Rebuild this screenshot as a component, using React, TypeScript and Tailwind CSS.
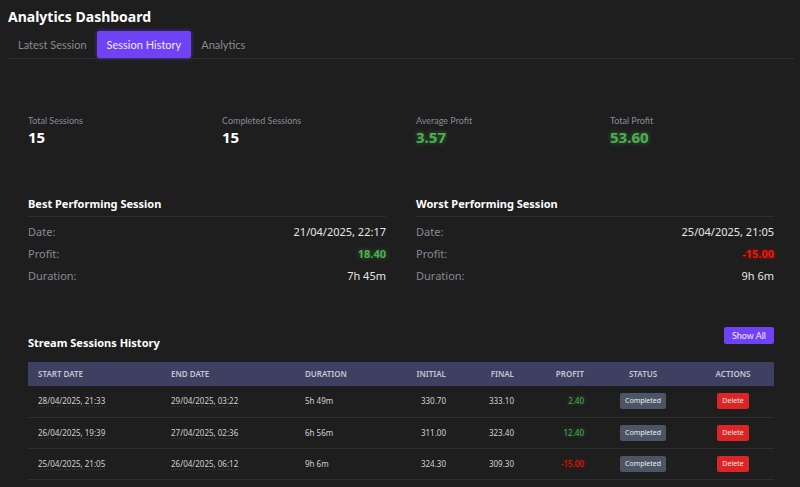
import { clsx } from 'clsx';

type Tone = 'plain' | 'gain' | 'loss';

const toneClass: Record<Tone, string> = {
  plain: 'text-white',
  gain: 'text-[#4caf50] [text-shadow:0_0_5px_rgba(76,175,80,0.6)]',
  loss: 'text-[#f5150a] [text-shadow:0_0_5px_rgba(245,21,10,0.6)]',
};

const tabs = ['Latest Session', 'Session History', 'Analytics'];

const stats: { label: string; value: string; tone: Tone }[] = [
  { label: 'Total Sessions', value: '15', tone: 'plain' },
  { label: 'Completed Sessions', value: '15', tone: 'plain' },
  { label: 'Average Profit', value: '3.57', tone: 'gain' },
  { label: 'Total Profit', value: '53.60', tone: 'gain' },
];

const sessions = [
  { start: '28/04/2025, 21:33', end: '29/04/2025, 03:22', duration: '5h 49m', initial: '330.70', final: '333.10', profit: '2.40' },
  { start: '26/04/2025, 19:39', end: '27/04/2025, 02:36', duration: '6h 56m', initial: '311.00', final: '323.40', profit: '12.40' },
  { start: '25/04/2025, 21:05', end: '26/04/2025, 06:12', duration: '9h 6m', initial: '324.30', final: '309.30', profit: '-15.00' },
  { start: '', end: '', duration: '', initial: '', final: '', profit: '' },
];

function Performance({ title, date, profit, duration, tone }: { title: string; date: string; profit: string; duration: string; tone: Tone }) {
  return (
    <section>
      <h2 className="border-b border-[#2e2e2e] pb-1 text-[11px] leading-4 font-bold text-white">{title}</h2>
      <dl className="mt-1 text-[11px] leading-[22px] text-[#868b94]">
        <div className="flex justify-between">
          <dt>Date:</dt>
          <dd className="text-[#e6e6e6]">{date}</dd>
        </div>
        <div className="flex justify-between">
          <dt>Profit:</dt>
          <dd className={clsx('font-bold', toneClass[tone])}>{profit}</dd>
        </div>
        <div className="flex justify-between">
          <dt>Duration:</dt>
          <dd className="text-[#e6e6e6]">{duration}</dd>
        </div>
      </dl>
    </section>
  );
}

function DateCell({ value }: { value: string }) {
  return (
    <td className="px-2.5">
      {value && <span className="border-b border-dotted border-[#3a3a3a]">{value}</span>}
    </td>
  );
}

export default function App() {
  return (
    <div className="h-screen overflow-hidden bg-[#1e1e1e] pt-1.5 pr-1.5 pl-2 font-['Noto_Sans',sans-serif] text-[#d0d2d6]">
      <h1 className="text-[14px] leading-[22px] font-bold text-white">Analytics Dashboard</h1>
      <nav className="mt-[3px] flex border-b border-[#2e2e2e] font-[Lato,sans-serif]">
        {tabs.map((tab) => (
          <button
            key={tab}
            className={clsx(
              'h-[27px] rounded-[2px] px-2.5 text-[11px] leading-4 whitespace-nowrap',
              tab === 'Session History' ? 'bg-[#6f42f5] text-[#efeaff] shadow-[0_0_4px_rgba(111,66,245,0.6)]' : 'text-[#868b94]',
            )}
          >
            {tab}
          </button>
        ))}
      </nav>

      <main className="px-5 pt-[55px]">
        <dl className="grid grid-cols-4 gap-[30px]">
          {stats.map((s) => (
            <div key={s.label}>
              <dt className="font-[Lato,sans-serif] text-[9px] leading-[14px] whitespace-nowrap text-[#868b94]">{s.label}</dt>
              <dd className={clsx('text-[15px] leading-[18px] font-bold', toneClass[s.tone])}>{s.value}</dd>
            </div>
          ))}
        </dl>

        <div className="mt-[50px] grid grid-cols-2 gap-[30px]">
          <Performance title="Best Performing Session" date="21/04/2025, 22:17" profit="18.40" duration="7h 45m" tone="gain" />
          <Performance title="Worst Performing Session" date="25/04/2025, 21:05" profit="-15.00" duration="9h 6m" tone="loss" />
        </div>

        <div className="mt-10 flex items-start justify-between">
          <h2 className="mt-2 text-[11px] leading-4 font-bold text-white">Stream Sessions History</h2>
          <button className="h-[17px] rounded-[2px] bg-[#6f42f5] px-2 font-[Lato,sans-serif] text-[9px] leading-4 text-[#efeaff]">Show All</button>
        </div>

        <table className="mt-[11px] w-full table-fixed border-collapse text-left text-[8px] leading-3">
          <colgroup>
            <col className="w-[133px]" />
            <col className="w-[134px]" />
            <col className="w-[90px]" />
            <col className="w-[71px]" />
            <col className="w-[68px]" />
            <col className="w-[70px]" />
            <col className="w-[98px]" />
            <col className="w-[82px]" />
          </colgroup>
          <thead>
            <tr className="h-6 bg-[#3d4061] text-[#c4c7d2] uppercase *:px-2.5 *:font-semibold">
              <th>Start Date</th>
              <th>End Date</th>
              <th>Duration</th>
              <th className="text-right">Initial</th>
              <th className="text-right">Final</th>
              <th className="text-right">Profit</th>
              <th className="text-center">Status</th>
              <th className="text-center">Actions</th>
            </tr>
          </thead>
          <tbody>
            {sessions.map((s, i) => (
              <tr key={i} className="h-[31px] border-b border-[#2e2e2e]">
                <DateCell value={s.start} />
                <DateCell value={s.end} />
                <td className="px-2.5">{s.duration}</td>
                <td className="px-2.5 text-right">{s.initial}</td>
                <td className="px-2.5 text-right">{s.final}</td>
                <td className={clsx('px-2.5 text-right', toneClass[s.profit.startsWith('-') ? 'loss' : 'gain'])}>{s.profit}</td>
                <td className="text-center">
                  <span className="mx-auto block w-fit rounded-[2px] bg-[#4b5563] px-[5px] text-[7px] leading-4 text-[#eeeeee]">Completed</span>
                </td>
                <td className="text-center">
                  <button className="mx-auto block rounded-[2px] bg-[#dc2626] px-[5px] text-[7px] leading-4 text-[#fbe4e4]">Delete</button>
                </td>
              </tr>
            ))}
          </tbody>
        </table>
      </main>
    </div>
  );
}
